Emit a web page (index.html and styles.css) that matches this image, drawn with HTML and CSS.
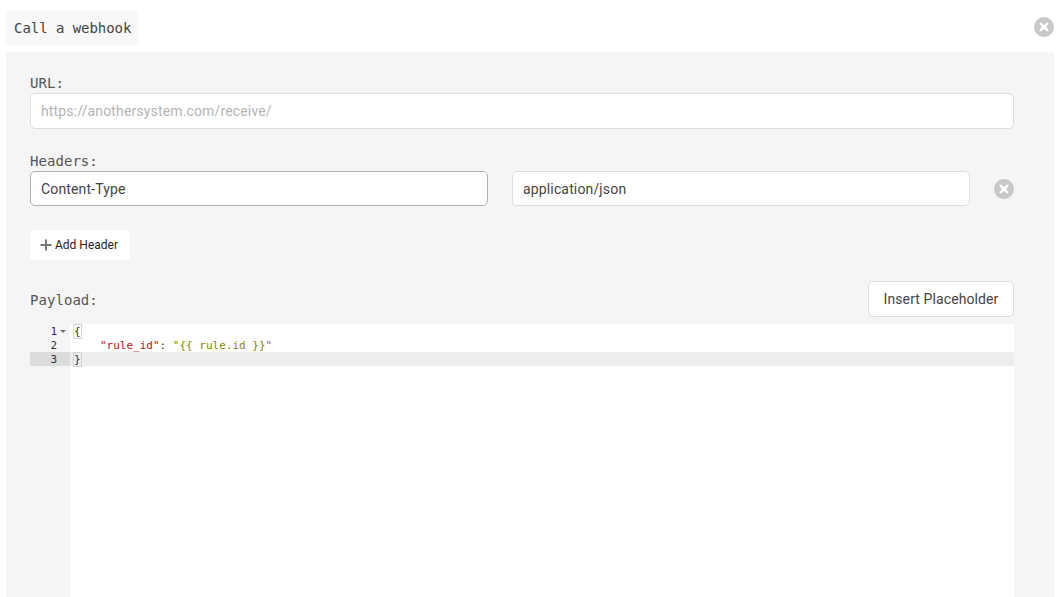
FILE: index.html
```html
<!DOCTYPE html>
<html lang="en">
<head>
<meta charset="utf-8">
<title>Call a webhook</title>
<link rel="stylesheet" href="styles.css">
</head>
<body>
<div class="head">
  <div class="tab">Call a webhook</div>
  <button class="clear" aria-label="Remove"><svg viewBox="0 0 20 20" class="x"><circle cx="10" cy="10" r="10" fill="#c8c8c8"/><path d="M6.8 6.8l6.4 6.4M13.2 6.8l-6.4 6.4" stroke="#fff" stroke-width="2.6" stroke-linecap="round"/></svg></button>
</div>
<main class="panel">
  <label class="label url-label">URL:</label>
  <input class="field url-field" placeholder="https://anothersystem.com/receive/">
  <label class="label headers-label">Headers:</label>
  <div class="header-row">
    <input class="field focus" value="Content-Type">
    <input class="field" value="application/json">
    <button class="clear" aria-label="Remove header"><svg viewBox="0 0 20 20" class="x"><circle cx="10" cy="10" r="10" fill="#c8c8c8"/><path d="M6.8 6.8l6.4 6.4M13.2 6.8l-6.4 6.4" stroke="#fff" stroke-width="2.6" stroke-linecap="round"/></svg></button>
  </div>
  <button class="add"><svg viewBox="0 0 12 12" class="plus"><path d="M6 .5v11M.5 6h11" stroke="#777" stroke-width="2"/></svg>Add Header</button>
  <div class="payload-row">
    <label class="label payload-label">Payload:</label>
    <button class="insert">Insert Placeholder</button>
  </div>
  <div class="editor">
    <div class="gutter">
      <div class="num">1<span class="fold"></span></div>
      <div class="num">2</div>
      <div class="num active-num">3</div>
    </div>
    <div class="code">
      <div class="line"><span class="bracket">{</span></div>
      <div class="line indent"><span class="key">"rule_id"</span>: <span class="str">"{{ rule.id }}"</span></div>
      <div class="line active"><span class="bracket">}</span></div>
    </div>
  </div>
</main>
</body>
</html>
```
FILE: styles.css
```css
* { box-sizing: border-box; }
html, body { height: 100%; }
body {
  margin: 0;
  padding: 10px 8px 0 6px;
  overflow: hidden;
  background: #fff;
  font-family: Roboto, sans-serif;
  color: #333;
  display: flex;
  flex-direction: column;
}
.head { display: flex; justify-content: space-between; align-items: center; height: 35px; margin-bottom: 7px; }
.tab {
  height: 35px;
  width: 132px;
  padding: 0 0 0 8px;
  display: flex;
  align-items: center;
  background: #f8f8f8;
  border-radius: 3px;
  font: 14px "DejaVu Sans Mono", monospace;
  letter-spacing: -0.05px;
  color: #444;
}
.clear { border: 0; padding: 0; background: none; width: 20px; height: 20px; display: block; }
.x { width: 20px; height: 20px; display: block; }
.head .clear { margin-top: -2px; }
.panel {
  flex: 1;
  min-height: 0;
  background: #f5f5f5;
  border-radius: 4px 4px 0 0;
  padding: 22px 40px 0 24px;
  display: flex;
  flex-direction: column;
}
.label { font: 14px/18px "DejaVu Sans Mono", monospace; letter-spacing: 0.05px; color: #555; display: block; }
.url-label { margin-bottom: 1px; }
.headers-label { margin-top: 23px; margin-bottom: 1px; }
.payload-label { padding-top: 2px; }
.field {
  display: block;
  width: 100%;
  height: 35px;
  padding: 0 10px;
  background: #fff;
  border: 1px solid #ddd;
  border-radius: 5px;
  font: 14px Roboto, sans-serif;
  letter-spacing: 0.15px;
  color: #444;
  outline: 0;
}
.url-field { height: 36px; }
.field::placeholder { color: #b4b4b4; opacity: 1; }
.focus { border-color: #b0b0b0; }
.header-row { display: flex; align-items: center; gap: 24px; }
.header-row .field { flex: 1; min-width: 0; }
.add {
  align-self: flex-start;
  margin-top: 24px;
  width: 100px;
  height: 30px;
  padding: 0 0 0 10px;
  border: 0;
  border-radius: 3px;
  background: #fff;
  font: 12px Roboto, sans-serif;
  color: #222;
  display: flex;
  align-items: center;
  gap: 3px;
}
.plus { width: 12px; height: 12px; }
.payload-row { display: flex; justify-content: space-between; align-items: center; margin-top: 21px; height: 36px; margin-bottom: 7px; }
.insert {
  width: 146px;
  height: 36px;
  padding: 0;
  background: #fff;
  border: 1px solid #ddd;
  border-radius: 5px;
  font: 14px Roboto, sans-serif;
  letter-spacing: 0.1px;
  color: #444;
}
.editor { flex: 1; min-height: 0; display: flex; background: #fff; font: 11px/16px "DejaVu Sans Mono", monospace; }
.gutter { width: 40px; background: #f5f5f5; color: #333; }
.num { height: 14px; padding-right: 13px; text-align: right; position: relative; }
.active-num { background: #dcdcdc; }
.fold {
  position: absolute;
  right: 4px;
  top: 6px;
  border-left: 3px solid transparent;
  border-right: 3px solid transparent;
  border-top: 3px solid #777;
}
.code { flex: 1; min-width: 0; }
.line { height: 14px; padding-left: 4px; white-space: pre; color: #333; }
.indent { padding-left: 30px; }
.active { background: #eee; }
.bracket { outline: 1px solid #d4d4d4; outline-offset: 0; }
.key { color: #b11; }
.str { color: #880; }
```
